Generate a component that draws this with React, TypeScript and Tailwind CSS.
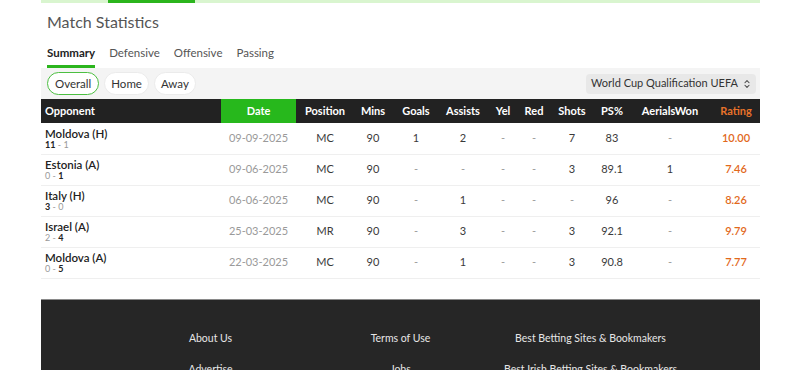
import React from "react";
import { ChevronsUpDown } from "lucide-react";

const rows = [
  { opp: "Moldova (H)", s1: "11", s2: "1", win: 1, date: "09-09-2025", pos: "MC", mins: "90", goals: "1", ast: "2", yel: "-", red: "-", shots: "7", ps: "83", aer: "-", rating: "10.00" },
  { opp: "Estonia (A)", s1: "0", s2: "1", win: 2, date: "09-06-2025", pos: "MC", mins: "90", goals: "-", ast: "-", yel: "-", red: "-", shots: "3", ps: "89.1", aer: "1", rating: "7.46" },
  { opp: "Italy (H)", s1: "3", s2: "0", win: 1, date: "06-06-2025", pos: "MC", mins: "90", goals: "-", ast: "1", yel: "-", red: "-", shots: "-", ps: "96", aer: "-", rating: "8.26" },
  { opp: "Israel (A)", s1: "2", s2: "4", win: 2, date: "25-03-2025", pos: "MR", mins: "90", goals: "-", ast: "3", yel: "-", red: "-", shots: "3", ps: "92.1", aer: "-", rating: "9.79" },
  { opp: "Moldova (A)", s1: "0", s2: "5", win: 2, date: "22-03-2025", pos: "MC", mins: "90", goals: "-", ast: "1", yel: "-", red: "-", shots: "3", ps: "90.8", aer: "-", rating: "7.77" },
];

const widths = [180, 75, 58, 38, 48, 46, 34, 28, 48, 32, 84, 48];

function Cell({ v }: { v: string }) {
  return <td className={`text-center ${v === "-" ? "text-[#9a9a9a]" : "text-[#3a3a3a]"}`}>{v}</td>;
}

export default function App() {
  return (
    <div className="w-[800px] h-[370px] overflow-hidden bg-white" style={{ fontFamily: "Lato, 'Open Sans', sans-serif" }}>
      <div className="ml-[41px] w-[719px]">
        <div className="h-[3px] bg-[#d9f5cf] flex">
          <div className="ml-[67px] w-[87px] bg-[#2bb51d]" />
        </div>
        <div className="h-[36px] flex items-center pl-[6px] pt-[1px] text-[16px] text-[#555]">Match Statistics</div>
        <div className="flex gap-[14px] pl-[6px] text-[11.5px] text-[#555] h-[29px] items-start pt-[5px]">
          <div className="font-bold text-[#222] border-b-[3px] border-[#2bb51d] pb-[4px]">Summary</div>
          <div>Defensive</div>
          <div>Offensive</div>
          <div>Passing</div>
        </div>
        <div className="h-[31px] bg-[#f4f4f4] flex items-center px-[6px] text-[11.5px] text-[#333]">
          <div className="h-[23px] px-[7px] rounded-full border border-[#4cbf41] bg-white flex items-center">Overall</div>
          <div className="ml-[5px] h-[23px] px-[6px] rounded-full border border-[#ebebeb] bg-white flex items-center">Home</div>
          <div className="ml-[5px] h-[23px] px-[6px] rounded-full border border-[#ebebeb] bg-white flex items-center">Away</div>
          <div className="ml-auto mr-[-2px] h-[20px] pl-[5px] pr-[4px] rounded bg-[#e8e8e8] flex items-center gap-[4px] text-[11px]">
            World Cup Qualification UEFA
            <ChevronsUpDown size={10} strokeWidth={2.5} className="text-[#444]" />
          </div>
        </div>
        <table className="table-fixed w-[719px] border-collapse text-[11px]">
          <colgroup>
            {widths.map((w, i) => (
              <col key={i} style={{ width: w }} />
            ))}
          </colgroup>
          <thead>
            <tr className="h-[24px] bg-[#222] text-white text-[11px]">
              <th className="text-left pl-[4px] font-bold">Opponent</th>
              <th className="bg-[#27b81c] font-bold">Date</th>
              <th className="font-bold">Position</th>
              <th className="font-bold">Mins</th>
              <th className="font-bold">Goals</th>
              <th className="font-bold">Assists</th>
              <th className="font-bold">Yel</th>
              <th className="font-bold">Red</th>
              <th className="font-bold">Shots</th>
              <th className="font-bold">PS%</th>
              <th className="font-bold">AerialsWon</th>
              <th className="font-bold text-[#e8722a]">Rating</th>
            </tr>
          </thead>
          <tbody>
            {rows.map((r, i) => (
              <tr key={i} className="h-[31px] border-b border-[#efefef]">
                <td className="pl-[4px] leading-none">
                  <div className="font-semibold text-[#222] text-[11.5px]">{r.opp}</div>
                  <div className="text-[9px] mt-[1px]">
                    <span className={r.win === 1 ? "font-bold text-[#222]" : "text-[#999]"}>{r.s1}</span>
                    <span className="text-[#999]"> - </span>
                    <span className={r.win === 2 ? "font-bold text-[#222]" : "text-[#999]"}>{r.s2}</span>
                  </div>
                </td>
                <td className="text-center text-[#9a9a9a]">{r.date}</td>
                <Cell v={r.pos} />
                <Cell v={r.mins} />
                <Cell v={r.goals} />
                <Cell v={r.ast} />
                <Cell v={r.yel} />
                <Cell v={r.red} />
                <Cell v={r.shots} />
                <Cell v={r.ps} />
                <Cell v={r.aer} />
                <td className="text-center font-semibold text-[#e2691c]">{r.rating}</td>
              </tr>
            ))}
          </tbody>
        </table>
        <div className="mt-[20px] bg-[#262626] border-t border-[#8a8a8a] h-[80px]">
          <div className="w-[570px] mx-auto grid grid-cols-3 gap-y-[15px] pt-[30px] text-[10.5px] leading-[16px] text-[#e6e6e6] text-center">
            <div>About Us</div>
            <div>Terms of Use</div>
            <div>Best Betting Sites &amp; Bookmakers</div>
            <div>Advertise</div>
            <div>Jobs</div>
            <div>Best Irish Betting Sites &amp; Bookmakers</div>
          </div>
        </div>
      </div>
    </div>
  );
}
